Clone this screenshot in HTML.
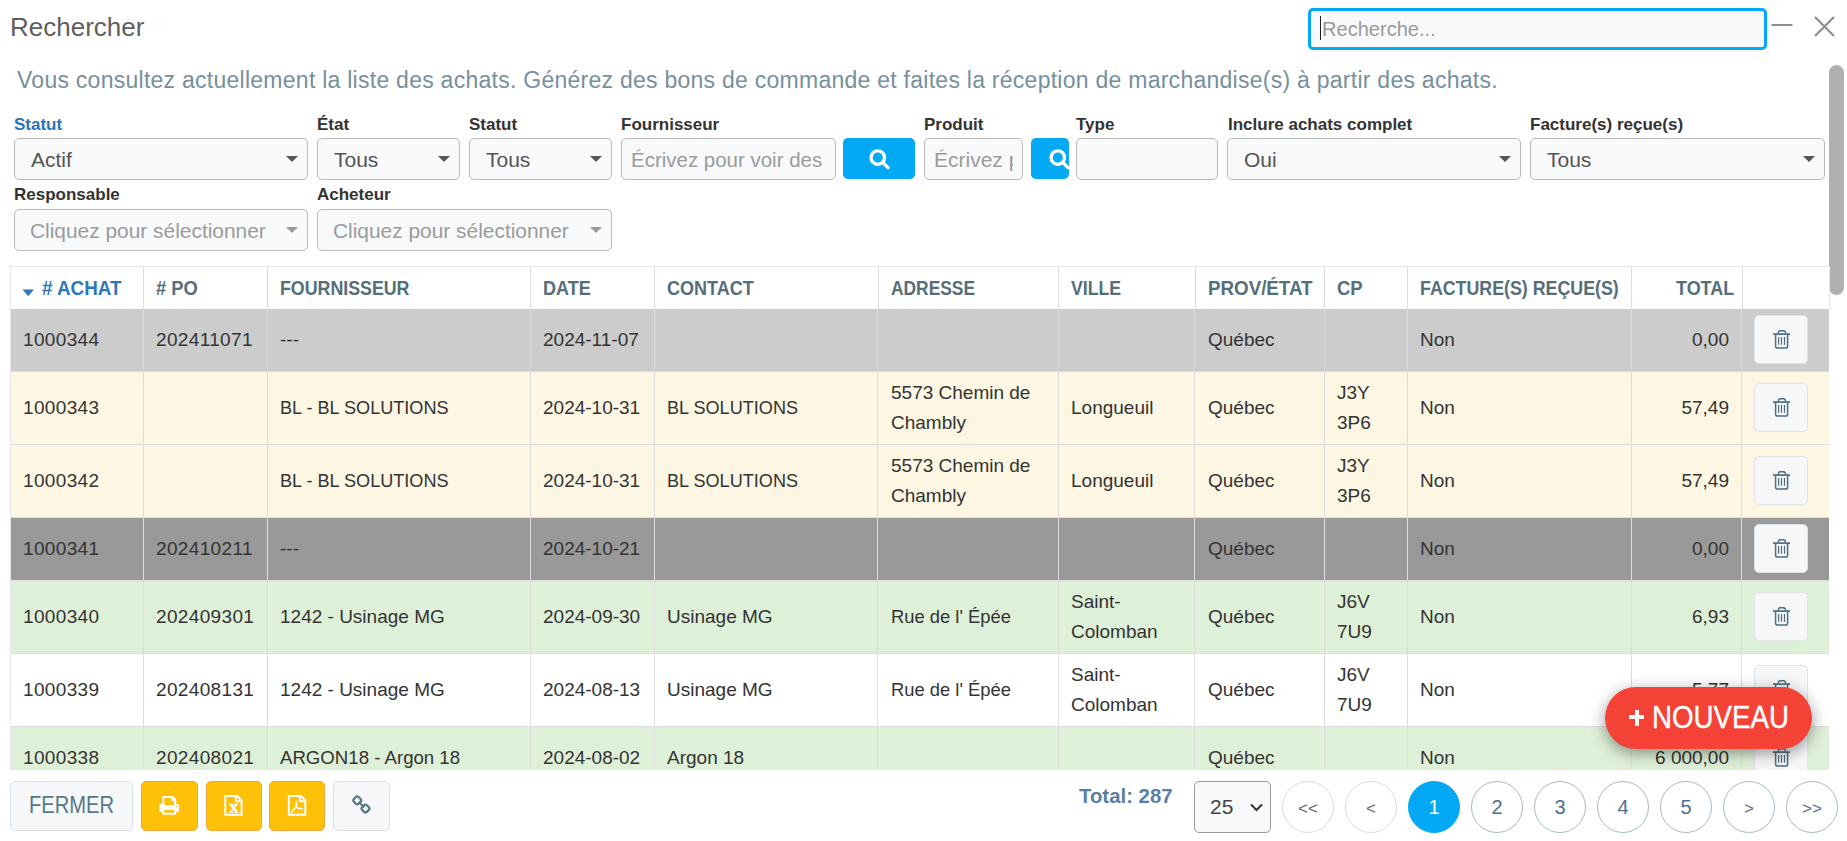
<!DOCTYPE html>
<html><head><meta charset="utf-8">
<style>
*{box-sizing:border-box;margin:0;padding:0}
html,body{width:1847px;height:841px;overflow:hidden;background:#fff;font-family:"Liberation Sans",sans-serif;color:#333}
.abs{position:absolute}
.title{left:10px;top:12px;font-size:26px;line-height:30px;color:#5f5f5f;white-space:nowrap}
.srch{left:1308px;top:8px;width:459px;height:42px;border:3px solid #03a9f4;border-radius:5px;background:#f8f9fa}
.srch .ph{position:absolute;left:11px;top:5px;font-size:21px;line-height:26px;color:#9a9a9a;transform:scaleX(0.955);transform-origin:0 0;white-space:nowrap}
.srch .caret{position:absolute;left:9px;top:5px;width:1px;height:24px;background:#222}
.desc{left:17px;top:67px;font-size:23px;line-height:26px;color:#76909d;white-space:nowrap;letter-spacing:0.26px}
.lbl{font-size:17px;font-weight:bold;line-height:20px;color:#333;white-space:nowrap}
.sel{height:42px;border:1px solid #b9b9b9;border-radius:5px;background:#f8f9fa;overflow:hidden}
.sel .v{position:absolute;left:16px;top:9px;font-size:21px;line-height:24px;color:#555;white-space:nowrap}
.sel .v.ph{color:#9b9b9b}
.sel .arr{position:absolute;right:9px;top:17px;width:0;height:0;border-left:6px solid transparent;border-right:6px solid transparent;border-top:6.5px solid #555}
.sel .arr.lt{border-top-color:#999}
.btnb{background:#03a9f4;border-radius:5px;overflow:hidden}
.vl{width:1px;background:#dddddd}
.th{top:12px;font-size:19.5px;font-weight:bold;line-height:21px;color:#546e7a;white-space:nowrap;transform:scaleX(0.94)}
.td{display:flex;align-items:center;font-size:19px;line-height:30px;color:#333;white-space:nowrap}
.dbtn{width:54px;height:49px;border:1px solid #dfe4e8;border-radius:5px;background:#f5f7f9}
.fbtn{border:1px solid #d9e0e5;border-radius:5px;background:#f5f7f9}
.ybtn{border:1px solid #f0a63a;border-radius:5px;background:#ffc107}
.pg{top:781px;width:52px;height:52px;border:1px solid #ccc;border-radius:50%;text-align:center;font-size:20px;line-height:50px}
</style></head><body>
<div class="abs title">Rechercher</div>
<div class="abs srch"><div class="caret"></div><div class="ph">Recherche...</div></div>
<svg class="abs" style="left:1770px;top:22px" width="24" height="6"><rect x="1.5" y="2" width="21" height="2" fill="#8f8f8f"/></svg>
<svg class="abs" style="left:1812px;top:14px" width="26" height="26"><path d="M3 3 L22 22 M22 3 L3 22" stroke="#8f8f8f" stroke-width="2.2"/></svg>
<div class="abs desc">Vous consultez actuellement la liste des achats. Générez des bons de commande et faites la réception de marchandise(s) à partir des achats.</div>

<!-- filter labels row 1 -->
<div class="abs lbl" style="left:14px;top:115px;color:#2a74b8">Statut</div>
<div class="abs lbl" style="left:317px;top:115px">État</div>
<div class="abs lbl" style="left:469px;top:115px">Statut</div>
<div class="abs lbl" style="left:621px;top:115px">Fournisseur</div>
<div class="abs lbl" style="left:924px;top:115px">Produit</div>
<div class="abs lbl" style="left:1076px;top:115px">Type</div>
<div class="abs lbl" style="left:1228px;top:115px">Inclure achats complet</div>
<div class="abs lbl" style="left:1530px;top:115px">Facture(s) reçue(s)</div>

<div class="abs sel" style="left:14px;top:138px;width:294px"><div class="v">Actif</div><div class="arr"></div></div>
<div class="abs sel" style="left:317px;top:138px;width:143px"><div class="v">Tous</div><div class="arr"></div></div>
<div class="abs sel" style="left:469px;top:138px;width:143px"><div class="v">Tous</div><div class="arr"></div></div>
<div class="abs sel" style="left:621px;top:138px;width:215px"><div class="v ph" style="left:9px;transform:scaleX(0.975);transform-origin:0 0">Écrivez pour voir des</div></div>
<div class="abs btnb" style="left:843px;top:138px;width:72px;height:41px"><svg style="position:absolute;left:25px;top:10px" width="22" height="22" viewBox="0 0 22 22"><circle cx="9.8" cy="9.6" r="6.75" fill="none" stroke="#fff" stroke-width="3.4"/><path d="M14.6 14.4 L20 19.6" stroke="#fff" stroke-width="3.3" stroke-linecap="round"/></svg></div>
<div class="abs sel" style="left:924px;top:138px;width:99px"><div class="v ph" style="left:9px;width:79px;overflow:hidden">Écrivez pour</div></div>
<div class="abs btnb" style="left:1031px;top:138px;width:38px;height:41px"><svg style="position:absolute;left:17px;top:10px" width="22" height="22" viewBox="0 0 22 22"><circle cx="9.8" cy="9.6" r="6.75" fill="none" stroke="#fff" stroke-width="3.4"/><path d="M14.6 14.4 L20 19.6" stroke="#fff" stroke-width="3.3" stroke-linecap="round"/></svg></div>
<div class="abs sel" style="left:1076px;top:138px;width:142px"></div>
<div class="abs sel" style="left:1227px;top:138px;width:294px"><div class="v">Oui</div><div class="arr"></div></div>
<div class="abs sel" style="left:1530px;top:138px;width:295px"><div class="v">Tous</div><div class="arr"></div></div>

<div class="abs lbl" style="left:14px;top:185px">Responsable</div>
<div class="abs lbl" style="left:317px;top:185px">Acheteur</div>
<div class="abs sel" style="left:14px;top:209px;width:294px"><div class="v ph" style="left:15px;transform:scaleX(0.995);transform-origin:0 0">Cliquez pour sélectionner</div><div class="arr lt"></div></div>
<div class="abs sel" style="left:317px;top:209px;width:295px"><div class="v ph" style="left:15px;transform:scaleX(0.995);transform-origin:0 0">Cliquez pour sélectionner</div><div class="arr lt"></div></div>

<!-- scrollbar -->
<div class="abs" style="left:1829px;top:65px;width:15px;height:230px;border-radius:7.5px;background:#b0b0b0"></div>

<!--TABLE-->
<div class="abs tbl" style="left:10px;top:266px;width:1820px;height:504px;overflow:hidden">
<div class="abs" style="left:0;top:0;width:1820px;height:43px;border:1px solid #e2e8ee;border-bottom:none;background:#fff"></div>
<svg class="abs" style="left:12px;top:23px" width="13" height="8"><path d="M0.5 0.5H12L6.25 7.2Z" fill="#2e78b7"/></svg>
<div class="abs th" style="left:32px;color:#2e78b7;transform-origin:0 0;transform:scaleX(0.9646)"># ACHAT</div>
<div class="abs vl" style="left:133px;top:0;height:43px"></div>
<div class="abs th" style="left:146px;transform-origin:0 0;transform:scaleX(0.9403)"># PO</div>
<div class="abs vl" style="left:257px;top:0;height:43px"></div>
<div class="abs th" style="left:270px;transform-origin:0 0;transform:scaleX(0.912)">FOURNISSEUR</div>
<div class="abs vl" style="left:520px;top:0;height:43px"></div>
<div class="abs th" style="left:533px;transform-origin:0 0;transform:scaleX(0.9227)">DATE</div>
<div class="abs vl" style="left:644px;top:0;height:43px"></div>
<div class="abs th" style="left:657px;transform-origin:0 0;transform:scaleX(0.9247)">CONTACT</div>
<div class="abs vl" style="left:868px;top:0;height:43px"></div>
<div class="abs th" style="left:881px;transform-origin:0 0;transform:scaleX(0.8906)">ADRESSE</div>
<div class="abs vl" style="left:1048px;top:0;height:43px"></div>
<div class="abs th" style="left:1061px;transform-origin:0 0;transform:scaleX(0.9062)">VILLE</div>
<div class="abs vl" style="left:1185px;top:0;height:43px"></div>
<div class="abs th" style="left:1198px;transform-origin:0 0;transform:scaleX(0.9617)">PROV/ÉTAT</div>
<div class="abs vl" style="left:1314px;top:0;height:43px"></div>
<div class="abs th" style="left:1327px;transform-origin:0 0;transform:scaleX(0.9481)">CP</div>
<div class="abs vl" style="left:1397px;top:0;height:43px"></div>
<div class="abs th" style="left:1410px;transform-origin:0 0;transform:scaleX(0.913)">FACTURE(S) REÇUE(S)</div>
<div class="abs vl" style="left:1621px;top:0;height:43px"></div>
<div class="abs th" style="right:96px;transform-origin:100% 0;transform:scaleX(0.9208)">TOTAL</div>
<div class="abs vl" style="left:1732px;top:0;height:43px"></div>
<div class="abs" style="left:1px;top:43px;width:1818px;height:62px;background:#cccccc"></div>
<div class="abs" style="left:1px;top:105px;width:1818px;height:1px;background:#dddddd"></div>
<div class="abs td" style="left:13px;top:43px;height:62px;letter-spacing:0.35px;">1000344</div>
<div class="abs vl" style="left:133px;top:43px;height:63px"></div>
<div class="abs td" style="left:146px;top:43px;height:62px;letter-spacing:0.35px;">202411071</div>
<div class="abs vl" style="left:257px;top:43px;height:63px"></div>
<div class="abs td" style="left:270px;top:43px;height:62px;">---</div>
<div class="abs vl" style="left:520px;top:43px;height:63px"></div>
<div class="abs td" style="left:533px;top:43px;height:62px;">2024-11-07</div>
<div class="abs vl" style="left:644px;top:43px;height:63px"></div>
<div class="abs vl" style="left:867px;top:43px;height:63px"></div>
<div class="abs vl" style="left:1048px;top:43px;height:63px"></div>
<div class="abs vl" style="left:1184px;top:43px;height:63px"></div>
<div class="abs td" style="left:1198px;top:43px;height:62px;">Québec</div>
<div class="abs vl" style="left:1314px;top:43px;height:63px"></div>
<div class="abs vl" style="left:1397px;top:43px;height:63px"></div>
<div class="abs td" style="left:1410px;top:43px;height:62px;">Non</div>
<div class="abs vl" style="left:1621px;top:43px;height:63px"></div>
<div class="abs td" style="right:101px;top:43px;height:62px;text-align:right">0,00</div>
<div class="abs vl" style="left:1731px;top:43px;height:63px"></div>
<div class="abs dbtn" style="left:1744px;top:49px"><svg width="32" height="30" viewBox="0 0 32 30" style="position:absolute;left:11px;top:8px"><g fill="none" stroke="#4f6e82"><path d="M7 10.1H24" stroke-width="1.7"/><path d="M12.4 9.6V8.6Q12.4 6.8 14.2 6.8H17.6Q19.4 6.8 19.4 8.6V9.6" stroke-width="1.5"/><path d="M9.6 10.5V22.2Q9.6 24 11.4 24H19.8Q21.6 24 21.6 22.2V10.5" stroke-width="1.5"/><path d="M12.6 13V20.7M15.5 13V20.7M18.5 13V20.7" stroke-width="1.2"/></g></svg></div>
<div class="abs" style="left:1px;top:106px;width:1818px;height:72px;background:#fcf6e3"></div>
<div class="abs" style="left:1px;top:178px;width:1818px;height:1px;background:#dddddd"></div>
<div class="abs td" style="left:13px;top:106px;height:72px;letter-spacing:0.35px;">1000343</div>
<div class="abs vl" style="left:133px;top:106px;height:73px"></div>
<div class="abs vl" style="left:257px;top:106px;height:73px"></div>
<div class="abs td" style="left:270px;top:106px;height:72px;transform:scaleX(0.952);transform-origin:0 0;">BL - BL SOLUTIONS</div>
<div class="abs vl" style="left:520px;top:106px;height:73px"></div>
<div class="abs td" style="left:533px;top:106px;height:72px;">2024-10-31</div>
<div class="abs vl" style="left:644px;top:106px;height:73px"></div>
<div class="abs td" style="left:657px;top:106px;height:72px;transform:scaleX(0.952);transform-origin:0 0;">BL SOLUTIONS</div>
<div class="abs vl" style="left:867px;top:106px;height:73px"></div>
<div class="abs td" style="left:881px;top:106px;height:72px;">5573 Chemin de<br>Chambly</div>
<div class="abs vl" style="left:1048px;top:106px;height:73px"></div>
<div class="abs td" style="left:1061px;top:106px;height:72px;">Longueuil</div>
<div class="abs vl" style="left:1184px;top:106px;height:73px"></div>
<div class="abs td" style="left:1198px;top:106px;height:72px;">Québec</div>
<div class="abs vl" style="left:1314px;top:106px;height:73px"></div>
<div class="abs td" style="left:1327px;top:106px;height:72px;">J3Y<br>3P6</div>
<div class="abs vl" style="left:1397px;top:106px;height:73px"></div>
<div class="abs td" style="left:1410px;top:106px;height:72px;">Non</div>
<div class="abs vl" style="left:1621px;top:106px;height:73px"></div>
<div class="abs td" style="right:101px;top:106px;height:72px;text-align:right">57,49</div>
<div class="abs vl" style="left:1731px;top:106px;height:73px"></div>
<div class="abs dbtn" style="left:1744px;top:117px"><svg width="32" height="30" viewBox="0 0 32 30" style="position:absolute;left:11px;top:8px"><g fill="none" stroke="#4f6e82"><path d="M7 10.1H24" stroke-width="1.7"/><path d="M12.4 9.6V8.6Q12.4 6.8 14.2 6.8H17.6Q19.4 6.8 19.4 8.6V9.6" stroke-width="1.5"/><path d="M9.6 10.5V22.2Q9.6 24 11.4 24H19.8Q21.6 24 21.6 22.2V10.5" stroke-width="1.5"/><path d="M12.6 13V20.7M15.5 13V20.7M18.5 13V20.7" stroke-width="1.2"/></g></svg></div>
<div class="abs" style="left:1px;top:179px;width:1818px;height:72px;background:#fcf6e3"></div>
<div class="abs" style="left:1px;top:251px;width:1818px;height:1px;background:#dddddd"></div>
<div class="abs td" style="left:13px;top:179px;height:72px;letter-spacing:0.35px;">1000342</div>
<div class="abs vl" style="left:133px;top:179px;height:73px"></div>
<div class="abs vl" style="left:257px;top:179px;height:73px"></div>
<div class="abs td" style="left:270px;top:179px;height:72px;transform:scaleX(0.952);transform-origin:0 0;">BL - BL SOLUTIONS</div>
<div class="abs vl" style="left:520px;top:179px;height:73px"></div>
<div class="abs td" style="left:533px;top:179px;height:72px;">2024-10-31</div>
<div class="abs vl" style="left:644px;top:179px;height:73px"></div>
<div class="abs td" style="left:657px;top:179px;height:72px;transform:scaleX(0.952);transform-origin:0 0;">BL SOLUTIONS</div>
<div class="abs vl" style="left:867px;top:179px;height:73px"></div>
<div class="abs td" style="left:881px;top:179px;height:72px;">5573 Chemin de<br>Chambly</div>
<div class="abs vl" style="left:1048px;top:179px;height:73px"></div>
<div class="abs td" style="left:1061px;top:179px;height:72px;">Longueuil</div>
<div class="abs vl" style="left:1184px;top:179px;height:73px"></div>
<div class="abs td" style="left:1198px;top:179px;height:72px;">Québec</div>
<div class="abs vl" style="left:1314px;top:179px;height:73px"></div>
<div class="abs td" style="left:1327px;top:179px;height:72px;">J3Y<br>3P6</div>
<div class="abs vl" style="left:1397px;top:179px;height:73px"></div>
<div class="abs td" style="left:1410px;top:179px;height:72px;">Non</div>
<div class="abs vl" style="left:1621px;top:179px;height:73px"></div>
<div class="abs td" style="right:101px;top:179px;height:72px;text-align:right">57,49</div>
<div class="abs vl" style="left:1731px;top:179px;height:73px"></div>
<div class="abs dbtn" style="left:1744px;top:190px"><svg width="32" height="30" viewBox="0 0 32 30" style="position:absolute;left:11px;top:8px"><g fill="none" stroke="#4f6e82"><path d="M7 10.1H24" stroke-width="1.7"/><path d="M12.4 9.6V8.6Q12.4 6.8 14.2 6.8H17.6Q19.4 6.8 19.4 8.6V9.6" stroke-width="1.5"/><path d="M9.6 10.5V22.2Q9.6 24 11.4 24H19.8Q21.6 24 21.6 22.2V10.5" stroke-width="1.5"/><path d="M12.6 13V20.7M15.5 13V20.7M18.5 13V20.7" stroke-width="1.2"/></g></svg></div>
<div class="abs" style="left:1px;top:252px;width:1818px;height:62px;background:#999999"></div>
<div class="abs" style="left:1px;top:314px;width:1818px;height:1px;background:#dddddd"></div>
<div class="abs td" style="left:13px;top:252px;height:62px;letter-spacing:0.35px;">1000341</div>
<div class="abs vl" style="left:133px;top:252px;height:63px"></div>
<div class="abs td" style="left:146px;top:252px;height:62px;letter-spacing:0.35px;">202410211</div>
<div class="abs vl" style="left:257px;top:252px;height:63px"></div>
<div class="abs td" style="left:270px;top:252px;height:62px;">---</div>
<div class="abs vl" style="left:520px;top:252px;height:63px"></div>
<div class="abs td" style="left:533px;top:252px;height:62px;">2024-10-21</div>
<div class="abs vl" style="left:644px;top:252px;height:63px"></div>
<div class="abs vl" style="left:867px;top:252px;height:63px"></div>
<div class="abs vl" style="left:1048px;top:252px;height:63px"></div>
<div class="abs vl" style="left:1184px;top:252px;height:63px"></div>
<div class="abs td" style="left:1198px;top:252px;height:62px;">Québec</div>
<div class="abs vl" style="left:1314px;top:252px;height:63px"></div>
<div class="abs vl" style="left:1397px;top:252px;height:63px"></div>
<div class="abs td" style="left:1410px;top:252px;height:62px;">Non</div>
<div class="abs vl" style="left:1621px;top:252px;height:63px"></div>
<div class="abs td" style="right:101px;top:252px;height:62px;text-align:right">0,00</div>
<div class="abs vl" style="left:1731px;top:252px;height:63px"></div>
<div class="abs dbtn" style="left:1744px;top:258px"><svg width="32" height="30" viewBox="0 0 32 30" style="position:absolute;left:11px;top:8px"><g fill="none" stroke="#4f6e82"><path d="M7 10.1H24" stroke-width="1.7"/><path d="M12.4 9.6V8.6Q12.4 6.8 14.2 6.8H17.6Q19.4 6.8 19.4 8.6V9.6" stroke-width="1.5"/><path d="M9.6 10.5V22.2Q9.6 24 11.4 24H19.8Q21.6 24 21.6 22.2V10.5" stroke-width="1.5"/><path d="M12.6 13V20.7M15.5 13V20.7M18.5 13V20.7" stroke-width="1.2"/></g></svg></div>
<div class="abs" style="left:1px;top:315px;width:1818px;height:72px;background:#dff0d8"></div>
<div class="abs" style="left:1px;top:387px;width:1818px;height:1px;background:#dddddd"></div>
<div class="abs td" style="left:13px;top:315px;height:72px;letter-spacing:0.35px;">1000340</div>
<div class="abs vl" style="left:133px;top:315px;height:73px"></div>
<div class="abs td" style="left:146px;top:315px;height:72px;letter-spacing:0.35px;">202409301</div>
<div class="abs vl" style="left:257px;top:315px;height:73px"></div>
<div class="abs td" style="left:270px;top:315px;height:72px;">1242 - Usinage MG</div>
<div class="abs vl" style="left:520px;top:315px;height:73px"></div>
<div class="abs td" style="left:533px;top:315px;height:72px;">2024-09-30</div>
<div class="abs vl" style="left:644px;top:315px;height:73px"></div>
<div class="abs td" style="left:657px;top:315px;height:72px;">Usinage MG</div>
<div class="abs vl" style="left:867px;top:315px;height:73px"></div>
<div class="abs td" style="left:881px;top:315px;height:72px;transform:scaleX(0.967);transform-origin:0 0;">Rue de l' Épée</div>
<div class="abs vl" style="left:1048px;top:315px;height:73px"></div>
<div class="abs td" style="left:1061px;top:315px;height:72px;">Saint-<br>Colomban</div>
<div class="abs vl" style="left:1184px;top:315px;height:73px"></div>
<div class="abs td" style="left:1198px;top:315px;height:72px;">Québec</div>
<div class="abs vl" style="left:1314px;top:315px;height:73px"></div>
<div class="abs td" style="left:1327px;top:315px;height:72px;">J6V<br>7U9</div>
<div class="abs vl" style="left:1397px;top:315px;height:73px"></div>
<div class="abs td" style="left:1410px;top:315px;height:72px;">Non</div>
<div class="abs vl" style="left:1621px;top:315px;height:73px"></div>
<div class="abs td" style="right:101px;top:315px;height:72px;text-align:right">6,93</div>
<div class="abs vl" style="left:1731px;top:315px;height:73px"></div>
<div class="abs dbtn" style="left:1744px;top:326px"><svg width="32" height="30" viewBox="0 0 32 30" style="position:absolute;left:11px;top:8px"><g fill="none" stroke="#4f6e82"><path d="M7 10.1H24" stroke-width="1.7"/><path d="M12.4 9.6V8.6Q12.4 6.8 14.2 6.8H17.6Q19.4 6.8 19.4 8.6V9.6" stroke-width="1.5"/><path d="M9.6 10.5V22.2Q9.6 24 11.4 24H19.8Q21.6 24 21.6 22.2V10.5" stroke-width="1.5"/><path d="M12.6 13V20.7M15.5 13V20.7M18.5 13V20.7" stroke-width="1.2"/></g></svg></div>
<div class="abs" style="left:1px;top:388px;width:1818px;height:72px;background:#ffffff"></div>
<div class="abs" style="left:1px;top:460px;width:1818px;height:1px;background:#dddddd"></div>
<div class="abs td" style="left:13px;top:388px;height:72px;letter-spacing:0.35px;">1000339</div>
<div class="abs vl" style="left:133px;top:388px;height:73px"></div>
<div class="abs td" style="left:146px;top:388px;height:72px;letter-spacing:0.35px;">202408131</div>
<div class="abs vl" style="left:257px;top:388px;height:73px"></div>
<div class="abs td" style="left:270px;top:388px;height:72px;">1242 - Usinage MG</div>
<div class="abs vl" style="left:520px;top:388px;height:73px"></div>
<div class="abs td" style="left:533px;top:388px;height:72px;">2024-08-13</div>
<div class="abs vl" style="left:644px;top:388px;height:73px"></div>
<div class="abs td" style="left:657px;top:388px;height:72px;">Usinage MG</div>
<div class="abs vl" style="left:867px;top:388px;height:73px"></div>
<div class="abs td" style="left:881px;top:388px;height:72px;transform:scaleX(0.967);transform-origin:0 0;">Rue de l' Épée</div>
<div class="abs vl" style="left:1048px;top:388px;height:73px"></div>
<div class="abs td" style="left:1061px;top:388px;height:72px;">Saint-<br>Colomban</div>
<div class="abs vl" style="left:1184px;top:388px;height:73px"></div>
<div class="abs td" style="left:1198px;top:388px;height:72px;">Québec</div>
<div class="abs vl" style="left:1314px;top:388px;height:73px"></div>
<div class="abs td" style="left:1327px;top:388px;height:72px;">J6V<br>7U9</div>
<div class="abs vl" style="left:1397px;top:388px;height:73px"></div>
<div class="abs td" style="left:1410px;top:388px;height:72px;">Non</div>
<div class="abs vl" style="left:1621px;top:388px;height:73px"></div>
<div class="abs td" style="right:101px;top:388px;height:72px;text-align:right">5,77</div>
<div class="abs vl" style="left:1731px;top:388px;height:73px"></div>
<div class="abs dbtn" style="left:1744px;top:399px"><svg width="32" height="30" viewBox="0 0 32 30" style="position:absolute;left:11px;top:8px"><g fill="none" stroke="#4f6e82"><path d="M7 10.1H24" stroke-width="1.7"/><path d="M12.4 9.6V8.6Q12.4 6.8 14.2 6.8H17.6Q19.4 6.8 19.4 8.6V9.6" stroke-width="1.5"/><path d="M9.6 10.5V22.2Q9.6 24 11.4 24H19.8Q21.6 24 21.6 22.2V10.5" stroke-width="1.5"/><path d="M12.6 13V20.7M15.5 13V20.7M18.5 13V20.7" stroke-width="1.2"/></g></svg></div>
<div class="abs" style="left:1px;top:461px;width:1818px;height:62px;background:#dff0d8"></div>
<div class="abs" style="left:1px;top:523px;width:1818px;height:1px;background:#dddddd"></div>
<div class="abs td" style="left:13px;top:461px;height:62px;letter-spacing:0.35px;">1000338</div>
<div class="abs vl" style="left:133px;top:461px;height:63px"></div>
<div class="abs td" style="left:146px;top:461px;height:62px;letter-spacing:0.35px;">202408021</div>
<div class="abs vl" style="left:257px;top:461px;height:63px"></div>
<div class="abs td" style="left:270px;top:461px;height:62px;transform:scaleX(0.98);transform-origin:0 0;">ARGON18 - Argon 18</div>
<div class="abs vl" style="left:520px;top:461px;height:63px"></div>
<div class="abs td" style="left:533px;top:461px;height:62px;">2024-08-02</div>
<div class="abs vl" style="left:644px;top:461px;height:63px"></div>
<div class="abs td" style="left:657px;top:461px;height:62px;">Argon 18</div>
<div class="abs vl" style="left:867px;top:461px;height:63px"></div>
<div class="abs vl" style="left:1048px;top:461px;height:63px"></div>
<div class="abs vl" style="left:1184px;top:461px;height:63px"></div>
<div class="abs td" style="left:1198px;top:461px;height:62px;">Québec</div>
<div class="abs vl" style="left:1314px;top:461px;height:63px"></div>
<div class="abs vl" style="left:1397px;top:461px;height:63px"></div>
<div class="abs td" style="left:1410px;top:461px;height:62px;">Non</div>
<div class="abs vl" style="left:1621px;top:461px;height:63px"></div>
<div class="abs td" style="right:101px;top:461px;height:62px;text-align:right">6 000,00</div>
<div class="abs vl" style="left:1731px;top:461px;height:63px"></div>
<div class="abs dbtn" style="left:1744px;top:467px"><svg width="32" height="30" viewBox="0 0 32 30" style="position:absolute;left:11px;top:8px"><g fill="none" stroke="#4f6e82"><path d="M7 10.1H24" stroke-width="1.7"/><path d="M12.4 9.6V8.6Q12.4 6.8 14.2 6.8H17.6Q19.4 6.8 19.4 8.6V9.6" stroke-width="1.5"/><path d="M9.6 10.5V22.2Q9.6 24 11.4 24H19.8Q21.6 24 21.6 22.2V10.5" stroke-width="1.5"/><path d="M12.6 13V20.7M15.5 13V20.7M18.5 13V20.7" stroke-width="1.2"/></g></svg></div>
<div class="abs" style="left:0;top:0;width:1px;height:504px;background:#e2e8ee"></div>
</div>
<!--FOOTER-->
<div class="abs fbtn" style="left:10px;top:781px;width:123px;height:50px"><div class="abs" style="left:18px;top:9px;font-size:24px;line-height:28px;color:#587887;transform:scaleX(0.84);transform-origin:0 0;white-space:nowrap">FERMER</div></div>
<div class="abs ybtn" style="left:141px;top:781px;width:57px;height:50px"></div>
<div class="abs ybtn" style="left:206px;top:781px;width:56px;height:50px"></div>
<div class="abs ybtn" style="left:269px;top:781px;width:56px;height:50px"></div>
<div class="abs fbtn" style="left:333px;top:781px;width:57px;height:50px"></div>
<svg class="abs" style="left:138px;top:778px" width="64" height="56" viewBox="0 0 64 56"><path d="M25.4 18H34.2Q38.3 19.2 38.3 23.6V27H24.3V19.1Q24.3 18 25.4 18Z" fill="#fff"/><rect x="21.3" y="26" width="19.8" height="7.8" rx="1.6" fill="#fff"/><path d="M26.3 20H33.1V23H36V27.1H26.3Z" fill="#ffc107"/><path d="M24.3 33H38.3V35.6Q38.3 36.7 37.2 36.7H25.4Q24.3 36.7 24.3 35.6Z" fill="#fff"/><rect x="26.3" y="32" width="9.7" height="2.7" fill="#ffc107"/><circle cx="38.6" cy="28.4" r="0.9" fill="#ffc107"/></svg>
<svg class="abs" style="left:202px;top:778px" width="64" height="56" viewBox="0 0 64 56"><path d="M23.3 18H35.2L39.6 22.6V36.7H23.3Z" fill="none" stroke="#fff" stroke-width="2"/><path d="M33.9 18.3V23.2H39.3" fill="none" stroke="#fff" stroke-width="1.9"/><path d="M27.2 26.5H31.3M32.3 26.5H36.1M27.1 34.3H31.1M32.5 34.3H36.3" stroke="#fff" stroke-width="1.3"/><path d="M29 26.5L34.7 34.3" stroke="#fff" stroke-width="2.5"/><path d="M34.3 26.5L28.7 34.3" stroke="#fff" stroke-width="1.5"/></svg>
<svg class="abs" style="left:265px;top:778px" width="64" height="56" viewBox="0 0 64 56"><path d="M23.9 18H35.9L40.3 22.4V36.7H23.9Z" fill="none" stroke="#fff" stroke-width="2"/><path d="M34.7 18.3V23.3H40" fill="none" stroke="#fff" stroke-width="1.9"/><path d="M31.3 23.5V28.8L26.5 34.3M31.3 28.8L33 30.3L37.3 30.9" fill="none" stroke="#fff" stroke-width="1.6" stroke-linecap="round" stroke-linejoin="round"/></svg>
<svg class="abs" style="left:329px;top:778px" width="64" height="56" viewBox="0 0 64 56"><g fill="none" stroke="#587684" stroke-width="2.2"><rect x="24.95" y="19.05" width="6.6" height="6.6" rx="1.9" transform="rotate(45 28.25 22.35)"/><rect x="33.25" y="27.25" width="6.6" height="6.6" rx="1.9" transform="rotate(45 36.55 30.55)"/><path d="M29.6 23.7L35.2 29.2" stroke-width="2"/></g></svg>
<div class="abs" style="left:1079px;top:784px;font-size:21px;font-weight:bold;line-height:24px;color:#5a7fa3;white-space:nowrap;transform:scaleX(0.97);transform-origin:0 0">Total: 287</div>
<div class="abs" style="left:1194px;top:781px;width:77px;height:52px;border:1px solid #9a9a9a;border-radius:5px;background:#f8f9fa"><div class="abs" style="left:15px;top:13px;font-size:21px;line-height:24px;color:#444">25</div><svg class="abs" style="left:54px;top:20px" width="16" height="12"><path d="M2 2.5L7.5 8L13 2.5" fill="none" stroke="#333" stroke-width="2"/></svg></div>
<div class="abs pg" style="left:1282px;border-color:#dcdcdc;color:#666;font-size:17px;line-height:54px">&lt;&lt;</div>
<div class="abs pg" style="left:1345px;border-color:#dcdcdc;color:#666;font-size:17px;line-height:54px">&lt;</div>
<div class="abs pg" style="left:1408px;background:#03a9f4;border-color:#03a9f4;color:#fff">1</div>
<div class="abs pg" style="left:1471px;border-color:#a9b9c5;color:#4f6f92">2</div>
<div class="abs pg" style="left:1534px;border-color:#a9b9c5;color:#4f6f92">3</div>
<div class="abs pg" style="left:1597px;border-color:#a9b9c5;color:#4f6f92">4</div>
<div class="abs pg" style="left:1660px;border-color:#a9b9c5;color:#4f6f92">5</div>
<div class="abs pg" style="left:1723px;border-color:#a9b9c5;color:#4f6f92;font-size:17px;line-height:54px">&gt;</div>
<div class="abs pg" style="left:1786px;border-color:#a9b9c5;color:#4f6f92;font-size:17px;line-height:54px">&gt;&gt;</div>
<div class="abs" style="left:1605px;top:687px;width:207px;height:62px;border-radius:31px;background:#f44336;box-shadow:0 4px 16px rgba(0,0,0,0.42)"><div class="abs" style="left:24px;top:28px;width:15px;height:4px;background:#fff"></div><div class="abs" style="left:29.5px;top:22.5px;width:4px;height:16px;background:#fff"></div><div class="abs" style="left:47px;top:14px;font-size:31px;line-height:34px;color:#fff;white-space:nowrap;transform:scaleX(0.893);transform-origin:0 0;-webkit-text-stroke:0.4px #fff">NOUVEAU</div></div>
</body></html>
